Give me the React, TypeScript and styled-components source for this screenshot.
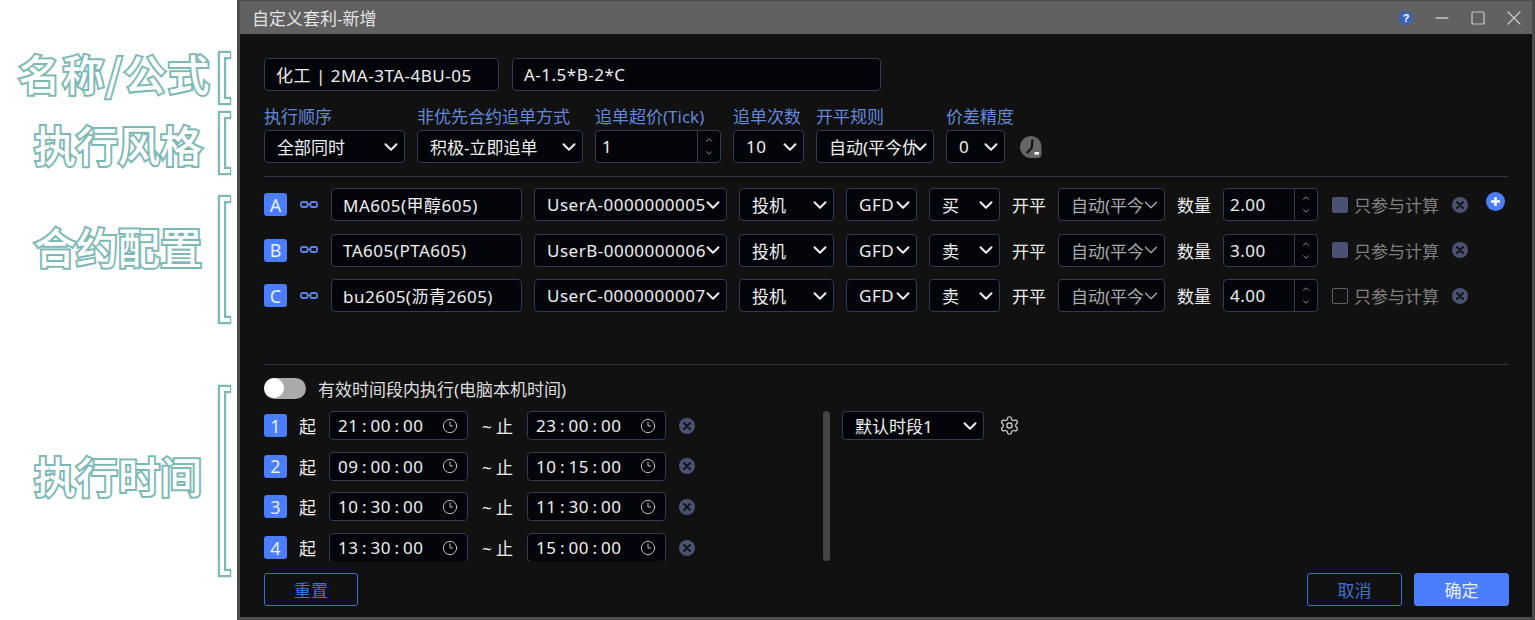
import styled, { createGlobalStyle } from "styled-components";
import { ChevronDown, ChevronUp, Clock3, Settings, X, Minus, Square } from "lucide-react";

const GlobalStyle = createGlobalStyle`
    html, body {
        margin: 0;
        padding: 0;
        background: #fff;
        overflow: hidden;
    }
    * {
        box-sizing: border-box;
    }
`;

const contracts = [
    { id: "A", name: "MA605(甲醇605)", user: "UserA-0000000005", side: "买", qty: "2.00", checked: true, add: true },
    { id: "B", name: "TA605(PTA605)", user: "UserB-0000000006", side: "卖", qty: "3.00", checked: true, add: false },
    { id: "C", name: "bu2605(沥青2605)", user: "UserC-0000000007", side: "卖", qty: "4.00", checked: false, add: false },
];

const periods = [
    { id: "1", from: ["21", "00", "00"], to: ["23", "00", "00"] },
    { id: "2", from: ["09", "00", "00"], to: ["10", "15", "00"] },
    { id: "3", from: ["10", "30", "00"], to: ["11", "30", "00"] },
    { id: "4", from: ["13", "30", "00"], to: ["15", "00", "00"] },
];

const notes = [
    { text: "名称/公式", height: 50, top: 53, right: 6, drop: -5, tracking: 1.6 },
    { text: "执行风格", height: 60, top: 10, right: 15, drop: 6, tracking: 0 },
    { text: "合约配置", height: 125, top: 24, right: 15, drop: 24, tracking: 0 },
    { text: "执行时间", height: 188, top: 65, right: 15, drop: 63, tracking: 0 },
];

const Bracket = ({ height }: { height: number }) => (
    <BracketSvg width="18" height={height + 6} viewBox={`0 0 18 ${height + 6}`}>
        <path d={`M14 5H5V${height + 1}H14`} fill="none" stroke="#7cb9b5" strokeWidth="8" />
        <path d={`M13 5H5V${height + 1}H13`} fill="none" stroke="#fff" strokeWidth="4" />
    </BracketSvg>
);

const LinkIcon = () => (
    <svg width="18" height="9" viewBox="0 0 18 9" fill="none" stroke="#5b84e8" strokeWidth="1.8">
        <rect x="1" y="2" width="6.5" height="5" rx="1.6" />
        <rect x="10.5" y="2" width="6.5" height="5" rx="1.6" />
        <path d="M7 4.5h4" />
    </svg>
);

const RemoveIcon = () => (
    <svg width="16" height="16" viewBox="0 0 16 16">
        <circle cx="8" cy="8" r="8" fill="#4a5172" />
        <path d="M5 5l6 6M11 5l-6 6" stroke="#14151b" strokeWidth="2" strokeLinecap="round" />
    </svg>
);

const AddIcon = () => (
    <svg width="19" height="19" viewBox="0 0 19 19">
        <circle cx="9.5" cy="9.5" r="9.5" fill="#4a7dff" />
        <path d="M5 9.5h9M9.5 5v9" stroke="#fff" strokeWidth="2.4" />
    </svg>
);

const HelpIcon = () => (
    <svg width="14" height="14" viewBox="0 0 14 14">
        <circle cx="7" cy="7" r="7" fill="#3a62b8" />
        <text x="7" y="11" textAnchor="middle" fontSize="11" fontWeight="700" fontFamily="Liberation Sans, sans-serif" fill="#fff">?</text>
    </svg>
);

const ModeIcon = () => (
    <svg width="22" height="22" viewBox="0 0 22 22">
        <path d="M11 0a10.5 10.5 0 0 1 10.5 10.5V18a4 4 0 0 1-4 4H11A11 11 0 0 1 11 0z" fill="#666" />
        <path d="M12.5 3.5l-.8 8.5-5 5" fill="none" stroke="#111" strokeWidth="2.2" />
        <rect x="14.5" y="16" width="4.5" height="2.6" fill="#fff" />
    </svg>
);

type SelectProps = { width: number; value: string; dim?: boolean; latin?: boolean; short?: boolean };

const Select = ({ width, value, dim, latin, short }: SelectProps) => (
    <SelectBox $width={width} $dim={dim} $latin={latin} $short={short}>
        <SelectText>{value}</SelectText>
        <ChevronDown size={22} strokeWidth={dim ? 1.4 : 2.2} />
    </SelectBox>
);

const Stepper = ({ width, value }: { width: number; value: string }) => (
    <StepperBox $width={width}>
        <StepperValue>{value}</StepperValue>
        <StepperArrows>
            <ChevronUp size={10} strokeWidth={1.8} />
            <ChevronDown size={10} strokeWidth={1.8} />
        </StepperArrows>
    </StepperBox>
);

const TimeInput = ({ parts }: { parts: string[] }) => (
    <TimeBox>
        <TimeText>
            {parts.map((part, index) => (
                <TimePart key={index}>
                    {index > 0 && <Colon>:</Colon>}
                    {part}
                </TimePart>
            ))}
        </TimeText>
        <Clock3 size={16} strokeWidth={1.4} />
    </TimeBox>
);

export default function App() {
    return (
        <Page>
            <GlobalStyle />
            <Notes>
                {notes.map((note) => (
                    <Note key={note.text} $height={note.height} $top={note.top}>
                        <NoteText $right={note.right} $drop={note.drop} $tracking={note.tracking}>
                            {note.text}
                        </NoteText>
                        <Bracket height={note.height} />
                    </Note>
                ))}
            </Notes>
            <Dialog>
                <TitleBar>
                    <Title>自定义套利-新增</Title>
                    <WindowButtons>
                        <WindowButton>
                            <HelpIcon />
                        </WindowButton>
                        <WindowButton>
                            <Minus size={20} strokeWidth={1.8} />
                        </WindowButton>
                        <WindowButton>
                            <Square size={16} strokeWidth={1.8} />
                        </WindowButton>
                        <WindowButton>
                            <X size={24} strokeWidth={1.2} />
                        </WindowButton>
                    </WindowButtons>
                </TitleBar>
                <Body>
                    <NameRow>
                        <TextInput $width={235}>化工 | 2MA-3TA-4BU-05</TextInput>
                        <TextInput $width={369}>A-1.5*B-2*C</TextInput>
                    </NameRow>
                    <StyleRow>
                        <Field>
                            <FieldLabel>执行顺序</FieldLabel>
                            <Select width={141} value="全部同时" />
                        </Field>
                        <Field>
                            <FieldLabel>非优先合约追单方式</FieldLabel>
                            <Select width={166} value="积极-立即追单" />
                        </Field>
                        <Field>
                            <FieldLabel>追单超价(Tick)</FieldLabel>
                            <Stepper width={126} value="1" />
                        </Field>
                        <Field>
                            <FieldLabel>追单次数</FieldLabel>
                            <Select width={71} value="10" latin />
                        </Field>
                        <Field>
                            <FieldLabel>开平规则</FieldLabel>
                            <Select width={118} value="自动(平今优" />
                        </Field>
                        <Field>
                            <FieldLabel>价差精度</FieldLabel>
                            <Select width={59} value="0" latin />
                        </Field>
                        <ModeButton>
                            <ModeIcon />
                        </ModeButton>
                    </StyleRow>
                    <Divider />
                    <ContractList>
                        {contracts.map((contract) => (
                            <ContractRow key={contract.id}>
                                <Badge>{contract.id}</Badge>
                                <LinkSlot>
                                    <LinkIcon />
                                </LinkSlot>
                                <TextInput $width={191}>{contract.name}</TextInput>
                                <Select width={193} value={contract.user} latin />
                                <Select width={95} value="投机" />
                                <Select width={71} value="GFD" latin />
                                <Select width={71} value={contract.side} />
                                <RowLabel>开平</RowLabel>
                                <Select width={107} value="自动(平今" dim />
                                <RowLabel>数量</RowLabel>
                                <Stepper width={95} value={contract.qty} />
                                <CheckGroup>
                                    <CheckBox $checked={contract.checked} />
                                    <CheckLabel>只参与计算</CheckLabel>
                                </CheckGroup>
                                <RemoveIcon />
                                {contract.add && (
                                    <AddSlot>
                                        <AddIcon />
                                    </AddSlot>
                                )}
                            </ContractRow>
                        ))}
                    </ContractList>
                    <LowerDivider />
                    <ToggleRow>
                        <Toggle>
                            <ToggleKnob />
                        </Toggle>
                        <ToggleLabel>有效时间段内执行(电脑本机时间)</ToggleLabel>
                    </ToggleRow>
                    <TimeSection>
                        <TimeList>
                            {periods.map((period) => (
                                <TimeRow key={period.id}>
                                    <Badge>{period.id}</Badge>
                                    <TimeLabel>起</TimeLabel>
                                    <TimeInput parts={period.from} />
                                    <TimeLabel $wide>~ 止</TimeLabel>
                                    <TimeInput parts={period.to} />
                                    <RemoveIcon />
                                </TimeRow>
                            ))}
                        </TimeList>
                        <ScrollBar />
                        <Select width={142} value="默认时段1" short />
                        <GearSlot>
                            <Settings size={21} strokeWidth={1.3} />
                        </GearSlot>
                    </TimeSection>
                    <Footer>
                        <ResetButton>重置</ResetButton>
                        <FooterRight>
                            <OutlineButton>取消</OutlineButton>
                            <PrimaryButton>确定</PrimaryButton>
                        </FooterRight>
                    </Footer>
                </Body>
            </Dialog>
        </Page>
    );
}

// Styled-components
const Page = styled.div`
    display: flex;
    width: 1535px;
    height: 620px;
    font-family: "Noto Sans", "Noto Sans CJK SC", sans-serif;
    font-size: 17px;
    color: #eee;
`;

const Notes = styled.div`
    width: 237px;
    flex: none;
    display: flex;
    flex-direction: column;
    background: #fff;
`;

const Note = styled.div<{ $height: number; $top: number }>`
    height: ${(p) => p.$height}px;
    margin-top: ${(p) => p.$top}px;
    display: flex;
    align-items: flex-start;
    justify-content: flex-end;
    padding-right: 2px;
`;

const NoteText = styled.span<{ $right: number; $drop: number; $tracking: number }>`
    margin: ${(p) => p.$drop}px ${(p) => p.$right}px 0 0;
    font-family: "Noto Sans CJK SC", sans-serif;
    font-size: 42px;
    font-weight: 500;
    line-height: 50px;
    letter-spacing: ${(p) => p.$tracking}px;
    white-space: nowrap;
    color: #fff;
    -webkit-text-stroke: 4px #7cb9b5;
    paint-order: stroke fill;
`;

const BracketSvg = styled.svg`
    flex: none;
    margin-top: -3px;
    margin-bottom: -3px;
    filter: drop-shadow(0 0 1px #9fd0cc);
`;

const Dialog = styled.div`
    flex: 1;
    display: flex;
    flex-direction: column;
    height: 620px;
    background: #111;
    border: 3px solid #4c4c4c;
    border-top: 1px solid #4c4c4c;
`;

const TitleBar = styled.div`
    height: 33px;
    flex: none;
    display: flex;
    align-items: center;
    justify-content: space-between;
    padding-left: 12px;
    background: #616161;
`;

const Title = styled.div`
    color: #e2e2e2;
`;

const WindowButtons = styled.div`
    display: flex;
    align-items: center;
    color: #c8c8c8;
`;

const WindowButton = styled.div`
    width: 36px;
    height: 24px;
    display: flex;
    align-items: center;
    justify-content: center;
`;

const Body = styled.div`
    flex: 1;
    display: flex;
    flex-direction: column;
    padding: 24px 24px 11px 24px;
    min-height: 0;
`;

const NameRow = styled.div`
    display: flex;
    gap: 13px;
`;

const TextInput = styled.div<{ $width: number }>`
    width: ${(p) => p.$width}px;
    height: 33px;
    flex: none;
    display: flex;
    align-items: center;
    padding-left: 11px;
    background: #04050a;
    border: 1px solid #343a52;
    border-radius: 4px;
    letter-spacing: 0.5px;
    white-space: nowrap;
    overflow: hidden;
`;

const StyleRow = styled.div`
    display: flex;
    align-items: flex-end;
    gap: 12px;
    margin-top: 15px;
`;

const Field = styled.div`
    display: flex;
    flex-direction: column;
    gap: 2px;
`;

const FieldLabel = styled.div`
    height: 22px;
    line-height: 22px;
    color: #6288dc;
    white-space: nowrap;
`;

const SelectBox = styled.div<{ $width: number; $dim?: boolean; $latin?: boolean; $short?: boolean }>`
    width: ${(p) => p.$width}px;
    height: ${(p) => (p.$short ? "29px" : "33px")};
    flex: none;
    display: flex;
    align-items: center;
    padding: 0 2px 0 12px;
    background: #04050a;
    border: 1px solid #343a52;
    border-radius: 4px;
    letter-spacing: ${(p) => (p.$latin ? "0.5px" : "0")};
    color: ${(p) => (p.$dim ? "#a9a9a9" : "#eee")};

    svg {
        flex: none;
        margin-left: -6px;
    }
`;

const SelectText = styled.span`
    flex: 1;
    min-width: 0;
    overflow: hidden;
    white-space: nowrap;
`;

const StepperBox = styled.div<{ $width: number }>`
    width: ${(p) => p.$width}px;
    height: 33px;
    flex: none;
    display: flex;
    background: #04050a;
    border: 1px solid #343a52;
    border-radius: 4px;
    letter-spacing: 0.5px;
`;

const StepperValue = styled.div`
    flex: 1;
    display: flex;
    align-items: center;
    padding-left: 6px;
`;

const StepperArrows = styled.div`
    width: 23px;
    display: flex;
    flex-direction: column;
    align-items: center;
    justify-content: center;
    gap: 3px;
    border-left: 1px solid #343a52;
    color: #bbb;
`;

const ModeButton = styled.div`
    height: 33px;
    display: flex;
    align-items: center;
    margin-left: -6px;
`;

const Divider = styled.div`
    height: 1px;
    flex: none;
    margin-top: 13px;
    background: #2f3345;
`;

const ContractList = styled.div`
    display: flex;
    flex-direction: column;
    gap: 12.5px;
    margin-top: 11px;
`;

const ContractRow = styled.div`
    display: flex;
    align-items: center;
    gap: 12px;
    height: 33px;
`;

const Badge = styled.div`
    width: 23px;
    height: 23px;
    flex: none;
    display: flex;
    align-items: center;
    justify-content: center;
    background: #4a7dff;
    border-radius: 3px;
    font-size: 18px;
    color: #e8eeff;
`;

const LinkSlot = styled.div`
    width: 20px;
    flex: none;
    display: flex;
    justify-content: center;
    margin-top: -1px;
`;

const RowLabel = styled.div`
    width: 34px;
    flex: none;
    white-space: nowrap;
`;

const CheckGroup = styled.div`
    width: 110px;
    flex: none;
    display: flex;
    align-items: center;
    gap: 6px;
    padding-left: 2px;
`;

const CheckBox = styled.div<{ $checked: boolean }>`
    width: 16px;
    height: 16px;
    flex: none;
    border-radius: 2px;
    border: 1px solid ${(p) => (p.$checked ? "#4a5172" : "#5a5f70")};
    background: ${(p) => (p.$checked ? "#4a5172" : "transparent")};
`;

const CheckLabel = styled.div`
    white-space: nowrap;
    color: #808080;
`;

const AddSlot = styled.div`
    display: flex;
    margin: -6px 0 0 6px;
`;

const LowerDivider = styled(Divider)`
    margin-top: 52px;
`;

const ToggleRow = styled.div`
    display: flex;
    align-items: center;
    gap: 12px;
    margin-top: 12px;
    height: 22px;
`;

const Toggle = styled.div`
    width: 42px;
    height: 21px;
    display: flex;
    align-items: center;
    background: #aaa;
    border-radius: 11px;
`;

const ToggleKnob = styled.div`
    width: 20px;
    height: 20px;
    background: #fff;
    border-radius: 50%;
`;

const ToggleLabel = styled.div`
    color: #ddd;
    white-space: nowrap;
`;

const TimeSection = styled.div`
    display: flex;
    align-items: flex-start;
    height: 150px;
    margin-top: 12px;
    overflow: hidden;
`;

const TimeList = styled.div`
    width: 559px;
    flex: none;
    display: flex;
    flex-direction: column;
    gap: 11.7px;
`;

const TimeRow = styled.div`
    display: flex;
    align-items: center;
    height: 29px;
    flex: none;

    > svg {
        margin-left: 13px;
    }
`;

const TimeLabel = styled.div<{ $wide?: boolean }>`
    width: ${(p) => (p.$wide ? "59px" : "42px")};
    flex: none;
    white-space: nowrap;
    text-align: ${(p) => (p.$wide ? "center" : "left")};
    padding-left: ${(p) => (p.$wide ? "0" : "12px")};
`;

const TimeBox = styled.div`
    width: 139px;
    height: 29px;
    flex: none;
    display: flex;
    align-items: center;
    justify-content: space-between;
    padding: 0 9px 0 8px;
    background: #04050a;
    border: 1px solid #343a52;
    border-radius: 4px;

    svg {
        color: #ccc;
    }
`;

const TimeText = styled.div`
    display: flex;
    letter-spacing: 0.5px;
`;

const TimePart = styled.span`
    white-space: nowrap;
`;

const Colon = styled.span`
    display: inline-block;
    width: 12px;
    text-align: center;
`;

const ScrollBar = styled.div`
    width: 7px;
    height: 150px;
    flex: none;
    margin-right: 12px;
    background: #444;
    border-radius: 4px;
`;

const GearSlot = styled.div`
    display: flex;
    margin: 4px 0 0 15px;
    color: #ddd;
`;

const Footer = styled.div`
    display: flex;
    justify-content: space-between;
    margin: 12px -1px 0 0;
`;

const FooterRight = styled.div`
    display: flex;
    gap: 12px;
`;

const OutlineButton = styled.div`
    width: 95px;
    height: 33px;
    display: flex;
    align-items: center;
    justify-content: center;
    border: 1px solid #3e6fd8;
    border-radius: 3px;
    color: #3e6fd8;
`;

const ResetButton = styled(OutlineButton)`
    width: 94px;
`;

const PrimaryButton = styled(OutlineButton)`
    background: #4a7dff;
    border-color: #4a7dff;
    color: #e8eeff;
`;
